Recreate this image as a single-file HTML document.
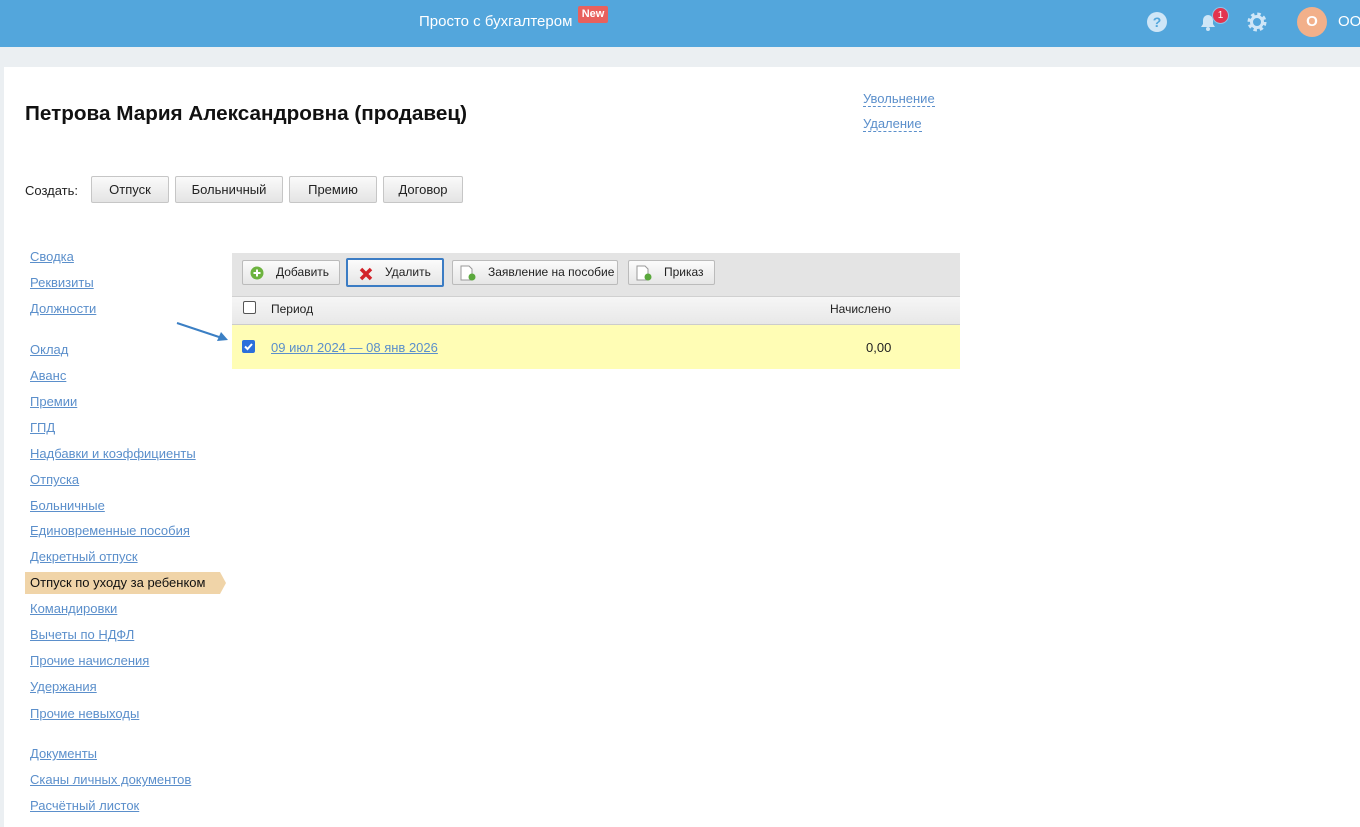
<!DOCTYPE html>
<html><head><meta charset="utf-8"><style>
*{margin:0;padding:0;box-sizing:border-box}
body{width:1360px;height:821px;overflow:hidden;background:#ebeff2;font-family:"Liberation Sans",Arial,sans-serif;font-size:13px;color:#222;position:relative}
.top{position:absolute;left:0;top:0;width:1360px;height:47px;background:#53a6dc}
.page{position:absolute;left:4px;top:67px;width:1356px;height:760px;background:#fff}
.a{position:absolute;color:#5b8fcb;text-decoration:underline;font-size:13px;white-space:nowrap}
.d{position:absolute;color:#5b8fcb;border-bottom:1px dashed #5b8fcb;font-size:13px;line-height:15px}
.btn{position:absolute;top:176px;height:27px;border:1px solid #c6c6c6;background:linear-gradient(#fafafa,#e4e4e4);font-size:13px;text-align:center;line-height:25px;border-radius:2px}
.tb{position:absolute;top:260px;height:25px;border:1px solid #bbb;background:linear-gradient(#fbfbfb,#e6e6e6);font-size:12px;line-height:23px;border-radius:2px}
.ic{position:absolute}
</style></head><body>
<div class="top">
 <div style="position:absolute;left:419px;top:13px;color:#fff;font-size:15px">Просто с бухгалтером</div>
 <div style="position:absolute;left:578px;top:6px;width:30px;height:17px;background:#e8615d;border-radius:2px;color:#fff;font-size:11px;font-weight:bold;text-align:center;line-height:17px">New</div>
 <div style="position:absolute;left:1147px;top:12px;width:20px;height:20px;border-radius:50%;background:#cfe6f7;color:#53a6dc;font-weight:bold;text-align:center;line-height:20px;font-size:14px">?</div>
 <svg class="ic" style="left:1197px;top:11px" width="22" height="22" viewBox="0 0 22 22"><path d="M4 16h14l-2-3V9a5 5 0 0 0-10 0v4z" fill="#cfe6f7"/><circle cx="11" cy="18" r="2" fill="#cfe6f7"/></svg>
 <div style="position:absolute;left:1212px;top:7px;width:17px;height:17px;border-radius:50%;background:#e3344f;border:1px solid #8cc4ea;color:#fff;font-size:10px;text-align:center;line-height:15px">1</div>
 <svg class="ic" style="left:1246px;top:11px" width="22" height="22" viewBox="0 0 22 22"><circle cx="11" cy="11" r="7" fill="none" stroke="#cfe6f7" stroke-width="5" stroke-dasharray="3 2.5"/><circle cx="11" cy="11" r="5.5" fill="none" stroke="#cfe6f7" stroke-width="3"/></svg>
 <div style="position:absolute;left:1297px;top:7px;width:30px;height:30px;border-radius:50%;background:#f2b08a;color:#fff;font-weight:bold;text-align:center;line-height:30px;font-size:15px">О</div>
 <div style="position:absolute;left:1338px;top:13px;color:#fff;font-size:15px">ООО</div>
</div>
<div class="page"></div>
<div style="position:absolute;left:25px;top:102px;font-size:20.7px;font-weight:bold;color:#111">Петрова Мария Александровна (продавец)</div>
<div class="d" style="left:863px;top:91px">Увольнение</div>
<div class="d" style="left:863px;top:116px">Удаление</div>
<div style="position:absolute;left:25px;top:183px">Создать:</div>
<div class="btn" style="left:91px;width:78px">Отпуск</div>
<div class="btn" style="left:175px;width:108px">Больничный</div>
<div class="btn" style="left:289px;width:88px">Премию</div>
<div class="btn" style="left:383px;width:80px">Договор</div>
<a class="a" style="left:30px;top:249px">Сводка</a>
<a class="a" style="left:30px;top:275px">Реквизиты</a>
<a class="a" style="left:30px;top:301px">Должности</a>
<a class="a" style="left:30px;top:342px">Оклад</a>
<a class="a" style="left:30px;top:368px">Аванс</a>
<a class="a" style="left:30px;top:394px">Премии</a>
<a class="a" style="left:30px;top:420px">ГПД</a>
<a class="a" style="left:30px;top:446px">Надбавки и коэффициенты</a>
<a class="a" style="left:30px;top:472px">Отпуска</a>
<a class="a" style="left:30px;top:498px">Больничные</a>
<a class="a" style="left:30px;top:523px">Единовременные пособия</a>
<a class="a" style="left:30px;top:549px">Декретный отпуск</a>
<svg class="ic" style="left:25px;top:572px" width="202" height="22"><path d="M0 0H195L201 11L195 22H0z" fill="#f0d4a8"/></svg>
<div style="position:absolute;left:30px;top:575px;color:#111">Отпуск по уходу за ребенком</div>
<a class="a" style="left:30px;top:601px">Командировки</a>
<a class="a" style="left:30px;top:627px">Вычеты по НДФЛ</a>
<a class="a" style="left:30px;top:653px">Прочие начисления</a>
<a class="a" style="left:30px;top:679px">Удержания</a>
<a class="a" style="left:30px;top:706px">Прочие невыходы</a>
<a class="a" style="left:30px;top:746px">Документы</a>
<a class="a" style="left:30px;top:772px">Сканы личных документов</a>
<a class="a" style="left:30px;top:798px">Расчётный листок</a>
<div style="position:absolute;left:232px;top:253px;width:728px;height:43px;background:#e4e4e4"></div>
<div style="position:absolute;left:232px;top:296px;width:728px;height:29px;background:linear-gradient(#f6f6f6,#e8e8e8);border-top:1px solid #d0d0d0;border-bottom:1px solid #ccc"></div>
<div style="position:absolute;left:232px;top:325px;width:728px;height:44px;background:#fffdb5"></div>
<div class="tb" style="left:242px;width:98px"><svg class="ic" style="left:7px;top:5px" width="14" height="14"><circle cx="7" cy="7" r="6.5" fill="#6db33f"/><path d="M7 3.5v7M3.5 7h7" stroke="#fff" stroke-width="2"/></svg><span style="position:absolute;left:33px">Добавить</span></div>
<div class="tb" style="left:346px;width:98px;top:258px;height:29px;border:2px solid #3b7cc4;line-height:25px"><svg class="ic" style="left:11px;top:7px" width="14" height="14"><path d="M2 2L12 12M12 2L2 12" stroke="#d2232a" stroke-width="3.5"/></svg><span style="position:absolute;left:37px">Удалить</span></div>
<div class="tb" style="left:452px;width:166px"><svg class="ic" style="left:7px;top:4px" width="16" height="17"><path d="M1 1h8l3 3v11H1z" fill="#fff" stroke="#999"/><circle cx="12" cy="12" r="3.5" fill="#5aa83c"/></svg><span style="position:absolute;left:35px">Заявление на пособие</span></div>
<div class="tb" style="left:628px;width:87px"><svg class="ic" style="left:7px;top:4px" width="16" height="17"><path d="M1 1h8l3 3v11H1z" fill="#fff" stroke="#999"/><circle cx="12" cy="12" r="3.5" fill="#5aa83c"/></svg><span style="position:absolute;left:35px">Приказ</span></div>
<div style="position:absolute;left:243px;top:301px;width:13px;height:13px;border:1px solid #555;border-radius:2px;background:#fff"></div>
<div style="position:absolute;left:271px;top:302px;font-size:12px">Период</div>
<div style="position:absolute;left:830px;top:302px;font-size:12px">Начислено</div>
<div style="position:absolute;left:242px;top:340px;width:13px;height:13px;border-radius:2px;background:#2b6fdb"><svg width="13" height="13"><path d="M3 6.5l2.5 2.5L10 4" stroke="#fff" stroke-width="2" fill="none"/></svg></div>
<a class="a" style="left:271px;top:340px">09 июл 2024 — 08 янв 2026</a>
<div style="position:absolute;left:866px;top:340px">0,00</div>
<svg class="ic" style="left:175px;top:320px" width="56" height="24"><path d="M2 3L47 18" stroke="#3b7fc4" stroke-width="2"/><path d="M53 20L42 21L46 12z" fill="#3b7fc4"/></svg>
</body></html>
